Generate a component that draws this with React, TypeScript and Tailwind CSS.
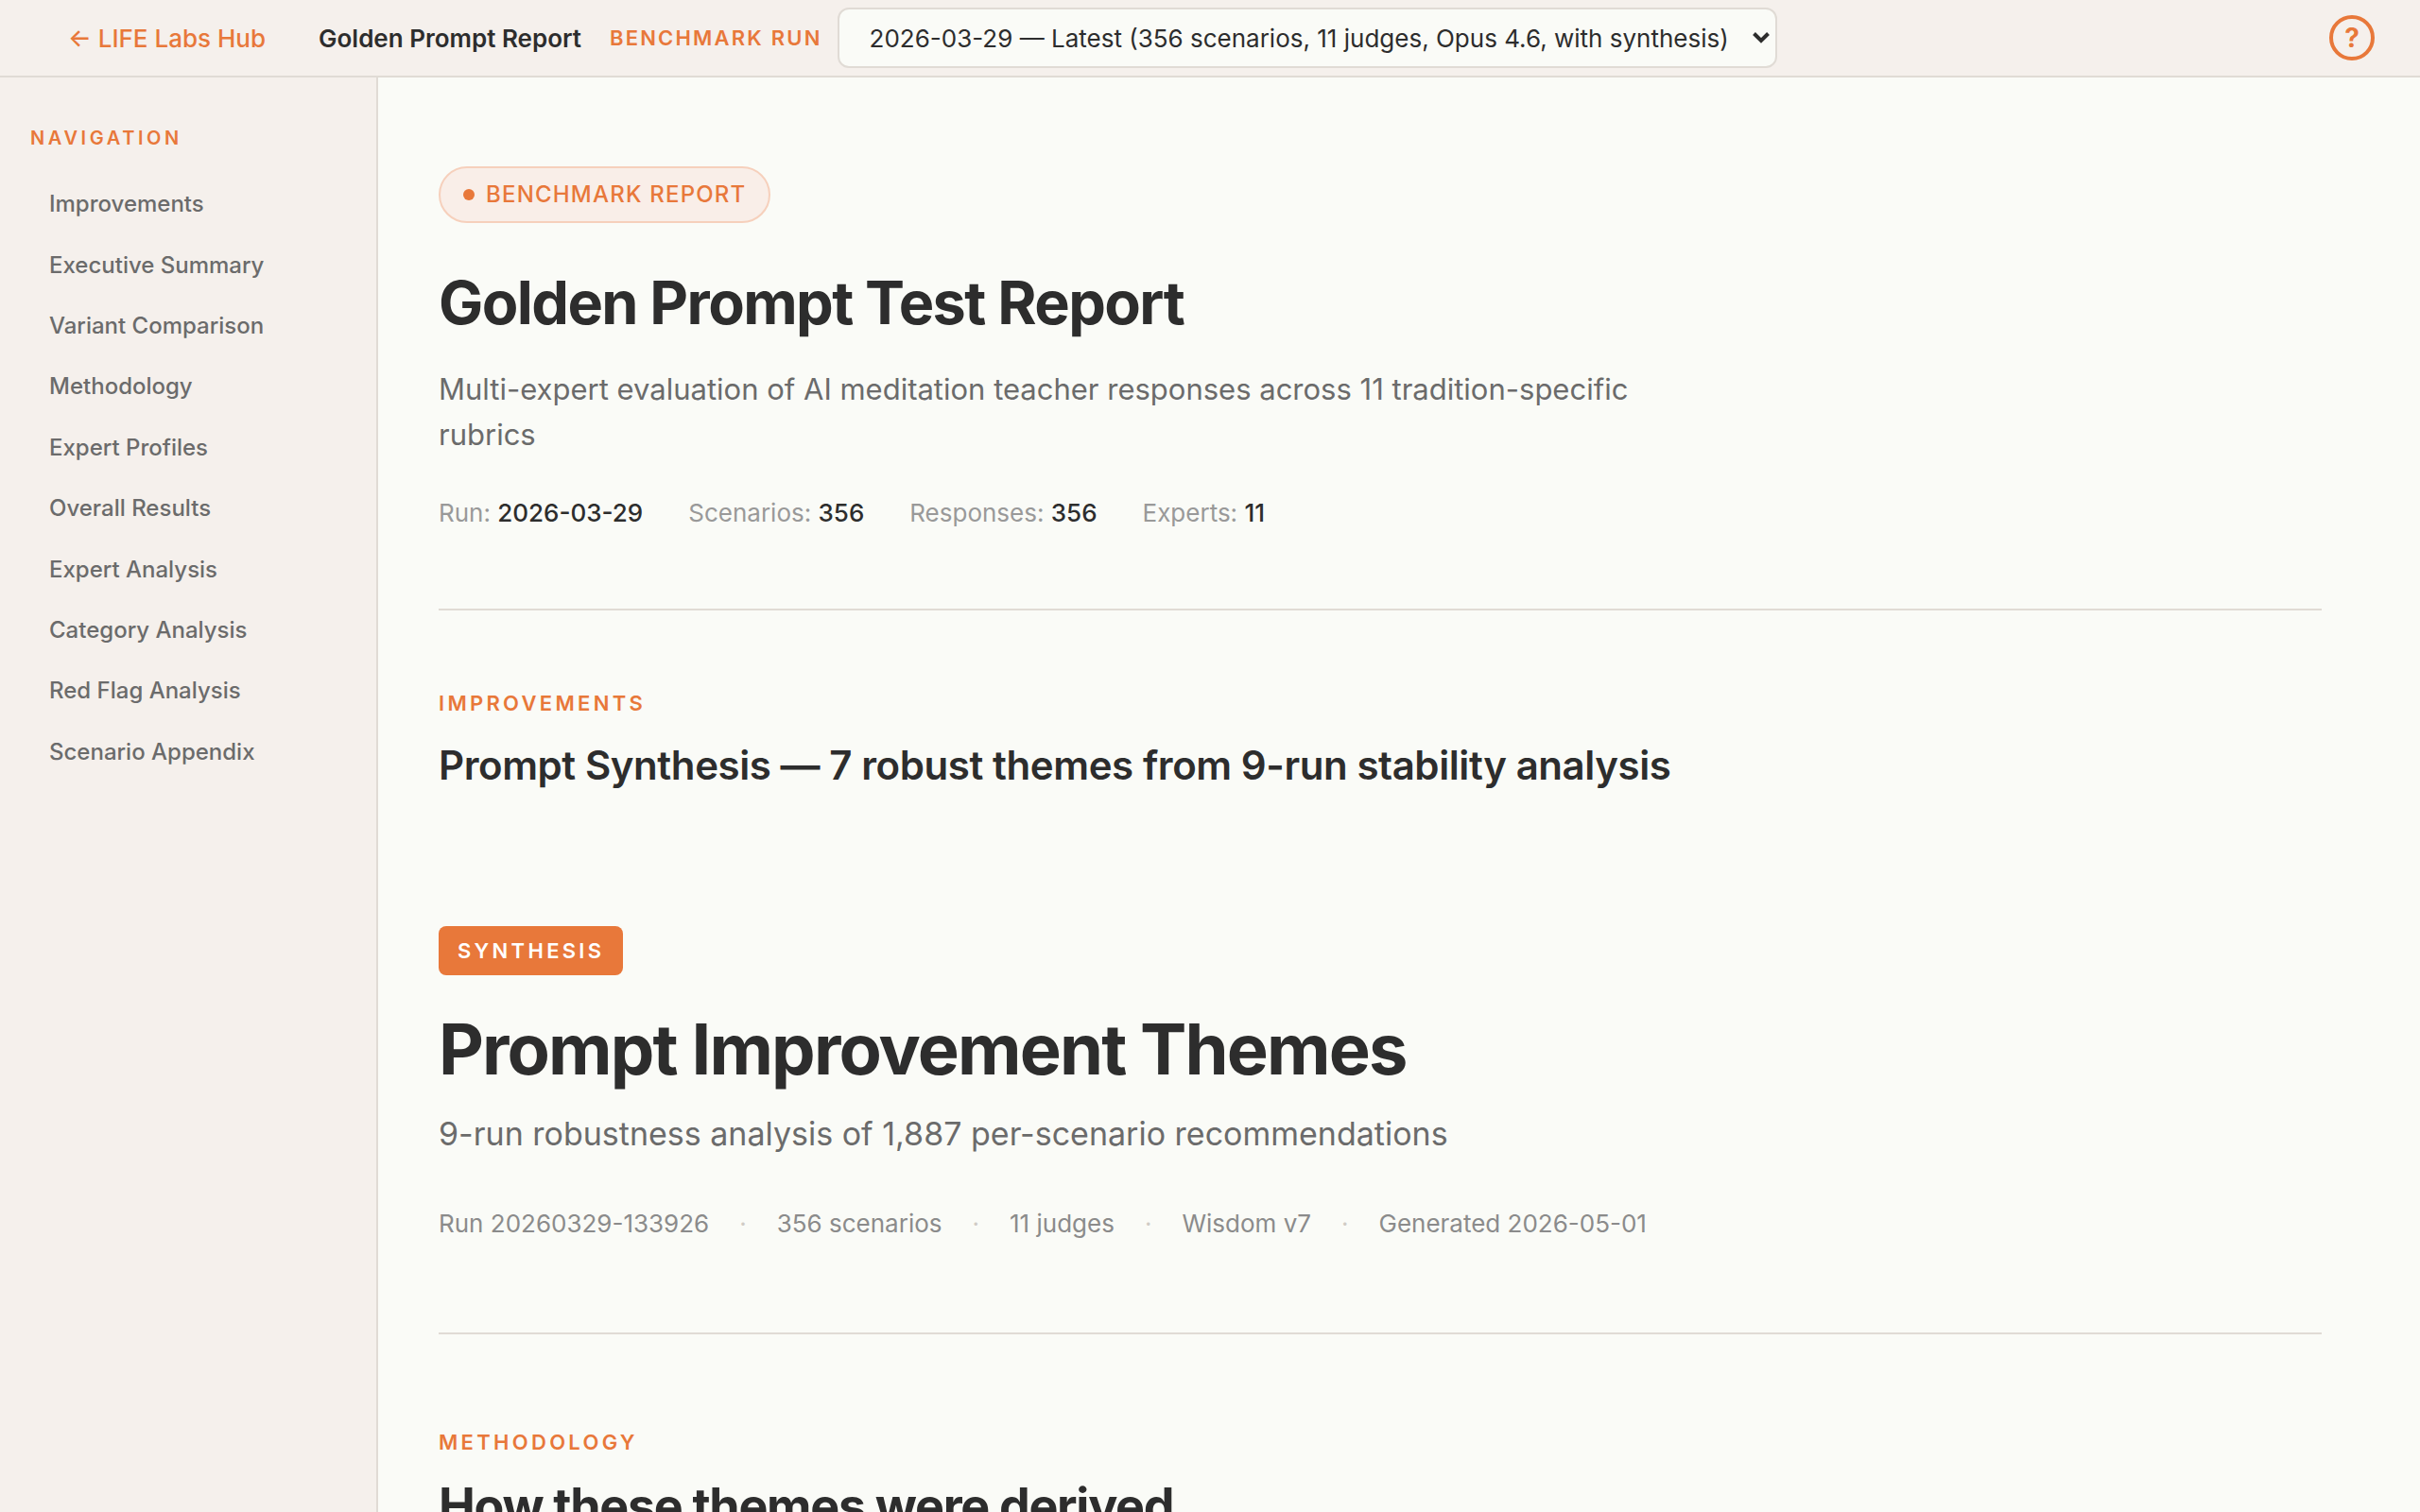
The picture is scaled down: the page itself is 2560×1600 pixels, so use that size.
import { useState } from 'react';

const navItems = [
  'Improvements',
  'Executive Summary',
  'Variant Comparison',
  'Methodology',
  'Expert Profiles',
  'Overall Results',
  'Expert Analysis',
  'Category Analysis',
  'Red Flag Analysis',
  'Scenario Appendix'
];

const stats = [
  { label: 'Run:', value: '2026-03-29' },
  { label: 'Scenarios:', value: '356' },
  { label: 'Responses:', value: '356' },
  { label: 'Experts:', value: '11' }
];

const synthesisMeta = [
  'Run 20260329-133926',
  '356 scenarios',
  '11 judges',
  'Wisdom v7',
  'Generated 2026-05-01'
];

const runs = ['2026-03-29 — Latest (356 scenarios, 11 judges, Opus 4.6, with synthesis)'];

const slug = (text: string) => '#' + text.toLowerCase().replace(/ /g, '-');

export default function App() {
  return (
    <div className="h-screen flex flex-col overflow-hidden bg-[#fafbf7] text-[#2d2d2d] font-['Inter',sans-serif] antialiased">
      <Header />
      <div className="flex flex-1 min-h-0">
        <Sidebar />
        <main className="flex-1 min-w-0 overflow-hidden pl-16 pr-[104px]">
          <ReportHero />
          <Improvements />
          <Synthesis />
          <Methodology />
        </main>
      </div>
    </div>
  );
}

const Header = () => {
  const [run, setRun] = useState<string>(runs[0]);

  return (
    <header className="flex items-center h-[82px] shrink-0 bg-[#f5f0ec] border-b-2 border-[#e0dbd5] pl-[72px] pr-12">
      <a href="#hub" className="text-[26px] font-medium text-[#e8783a] whitespace-nowrap mr-14">
        ← LIFE Labs Hub
      </a>
      <span className="text-[26px] font-semibold whitespace-nowrap mr-[30px]">
        Golden Prompt Report
      </span>
      <label
        htmlFor="run"
        className="text-[22px] font-semibold tracking-widest text-[#e8783a] whitespace-nowrap mr-4"
      >
        BENCHMARK RUN
      </label>
      <div className="relative">
        <select
          id="run"
          value={run}
          onChange={(e) => setRun(e.target.value)}
          className="appearance-none h-16 pl-8 pr-12 text-[26px] bg-[#fafbf7] border-2 border-[#e0dbd5] rounded-xl"
        >
          {runs.map((r) => (
            <option key={r}>{r}</option>
          ))}
        </select>
        <svg
          viewBox="0 0 18 12"
          className="absolute right-2 top-[26px] w-[18px] h-3 pointer-events-none"
          fill="none"
          stroke="#2d2d2d"
          strokeWidth="4"
        >
          <path d="M1.5 1.5 9 9l7.5-7.5" />
        </svg>
      </div>
      <button
        type="button"
        aria-label="Help"
        className="ml-auto size-12 rounded-full border-4 border-[#e8783a] text-[#e8783a] text-[28px] leading-10 font-bold"
      >
        ?
      </button>
    </header>
  );
};

const Sidebar = () => {
  return (
    <aside className="w-[400px] shrink-0 bg-[#f5f0ec] border-r-2 border-[#e0dbd5] pt-12 px-8">
      <h2 className="text-[20px] leading-8 font-semibold tracking-[0.18em] text-[#e8783a] mb-[22px]">
        NAVIGATION
      </h2>
      <nav className="flex flex-col h-[644px]">
        {navItems.map((item) => (
          <a
            key={item}
            href={slug(item)}
            className="flex flex-1 items-center px-5 text-[24px] font-medium text-[#6b6b6b] whitespace-nowrap"
          >
            {item}
          </a>
        ))}
      </nav>
    </aside>
  );
};

const Eyebrow = ({ children }: { children: string }) => {
  return (
    <p className="text-[22px] leading-9 font-semibold tracking-[0.15em] text-[#e8783a]">
      {children}
    </p>
  );
};

const ReportHero = () => {
  return (
    <section className="pt-[94px] pb-20 border-b-2 border-[#e0dbd5]">
      <div className="inline-flex items-center gap-3 h-[60px] px-6 rounded-full border-2 border-[#f6d0bc] bg-[#f9eee8]">
        <span className="size-3 rounded-full bg-[#e8783a]" />
        <span className="text-[24px] font-medium tracking-wider text-[#e8783a]">
          BENCHMARK REPORT
        </span>
      </div>
      <h1 className="mt-12 text-[63px] leading-[72px] font-bold tracking-tight">
        Golden Prompt Test Report
      </h1>
      <p className="mt-8 max-w-[1280px] text-[31px] leading-[48px] text-[#6b6b6b]">
        Multi-expert evaluation of AI meditation teacher responses across 11 tradition-specific
        rubrics
      </p>
      <div className="mt-[38px] flex gap-12 text-[26px] leading-[42px] text-[#999999]">
        {stats.map((stat) => (
          <span key={stat.label}>
            {stat.label} <strong className="font-medium text-[#2d2d2d]">{stat.value}</strong>
          </span>
        ))}
      </div>
    </section>
  );
};

const Improvements = () => {
  return (
    <section id="improvements" className="pt-20">
      <Eyebrow>IMPROVEMENTS</Eyebrow>
      <h2 className="mt-5 text-[42px] leading-[56px] font-semibold tracking-[-0.01em]">
        Prompt Synthesis — 7 robust themes from 9-run stability analysis
      </h2>
    </section>
  );
};

const Synthesis = () => {
  return (
    <section className="pt-[142px] pb-[94px] border-b-2 border-[#e0dbd5]">
      <span className="inline-block px-5 rounded-lg bg-[#e8783a] text-[22px] leading-[52px] font-semibold tracking-[0.15em] text-white">
        SYNTHESIS
      </span>
      <h2 className="mt-9 text-[74px] leading-[84px] font-bold tracking-tight">
        Prompt Improvement Themes
      </h2>
      <p className="mt-5 text-[34px] leading-[56px] text-[#6b6b6b]">
        9-run robustness analysis of 1,887 per-scenario recommendations
      </p>
      <div className="mt-[46px] flex gap-8 text-[26px] leading-[42px] text-[#8b8b8b]">
        {synthesisMeta.map((meta, i) => (
          <div key={meta} className="flex gap-8">
            {i > 0 && <span className="text-[#d0cbc5]">·</span>}
            <span>{meta}</span>
          </div>
        ))}
      </div>
    </section>
  );
};

const Methodology = () => {
  return (
    <section id="methodology" className="pt-24">
      <Eyebrow>METHODOLOGY</Eyebrow>
      <h2 className="mt-4 text-[52px] leading-[68px] font-bold tracking-tight whitespace-nowrap">
        How these themes were derived
      </h2>
    </section>
  );
};
